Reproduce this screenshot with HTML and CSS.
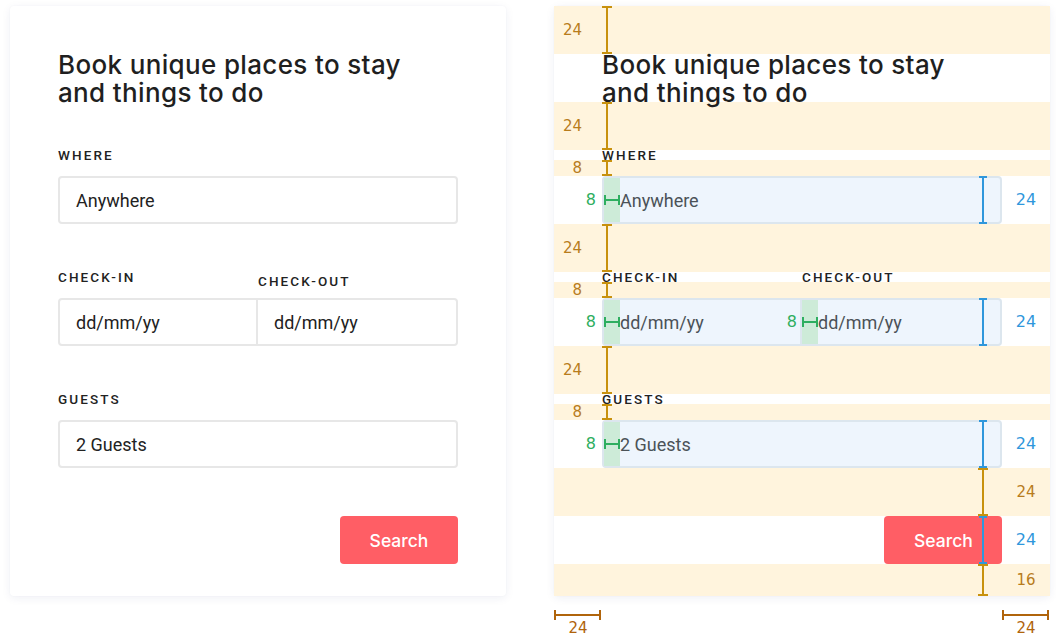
FILE: index.html
```html
<!DOCTYPE html>
<html lang="en">
<head>
<meta charset="utf-8">
<title>Booking form redline</title>
<link rel="stylesheet" href="styles.css">
</head>
<body>
<div class="page">
  <section class="card card--form">
    <div class="title-box"><h1 class="title">Book unique places to stay<br>and things to do</h1></div>

    <div class="field">
      <div class="label">WHERE</div>
      <div class="input">Anywhere</div>
    </div>

    <div class="field">
      <div class="label-row">
        <div class="label">CHECK-IN</div>
        <div class="label label--low">CHECK-OUT</div>
      </div>
      <div class="input-row">
        <div class="input input--half">dd/mm/yy</div>
        <div class="input input--half input--joined">dd/mm/yy</div>
      </div>
    </div>

    <div class="field">
      <div class="label">GUESTS</div>
      <div class="input">2 Guests</div>
    </div>

    <div class="actions">
      <button class="btn" type="button">Search</button>
    </div>
  </section>

  <div class="redline-col">
    <section class="card card--redline">
      <div class="band band--48">
        <span class="vbar vbar--left"></span><span class="num num--left">24</span>
      </div>
      <div class="row row--title">
        <h1 class="title">Book unique places to stay<br>and things to do</h1>
      </div>
      <div class="band band--48">
        <span class="vbar vbar--left"></span><span class="num num--left">24</span>
      </div>
      <div class="row row--label">
        <div class="label">WHERE</div>
      </div>
      <div class="band band--16">
        <span class="vbar vbar--left"></span><span class="num num--left">8</span>
      </div>
      <div class="row row--input">
        <div class="rl-input">
          <span class="pad"><span class="hbar-green"></span><span class="num-green">8</span></span>
          <span class="rl-text">Anywhere</span>
          <span class="vbar-blue"></span>
        </div>
        <span class="num num--right num--blue">24</span>
      </div>
      <div class="band band--48">
        <span class="vbar vbar--left"></span><span class="num num--left">24</span>
      </div>
      <div class="row row--label row--split">
        <div class="label label--half">CHECK-IN</div>
        <div class="label label--half">CHECK-OUT</div>
      </div>
      <div class="band band--16">
        <span class="vbar vbar--left"></span><span class="num num--left">8</span>
      </div>
      <div class="row row--input">
        <div class="rl-input rl-input--half">
          <span class="pad"><span class="hbar-green"></span><span class="num-green">8</span></span>
          <span class="rl-text">dd/mm/yy</span>
        </div>
        <div class="rl-input rl-input--half rl-input--joined">
          <span class="pad"><span class="hbar-green"></span><span class="num-green">8</span></span>
          <span class="rl-text">dd/mm/yy</span>
          <span class="vbar-blue"></span>
        </div>
        <span class="num num--right num--blue">24</span>
      </div>
      <div class="band band--48">
        <span class="vbar vbar--left"></span><span class="num num--left">24</span>
      </div>
      <div class="row row--label">
        <div class="label">GUESTS</div>
      </div>
      <div class="band band--16">
        <span class="vbar vbar--left"></span><span class="num num--left">8</span>
      </div>
      <div class="row row--input">
        <div class="rl-input">
          <span class="pad"><span class="hbar-green"></span><span class="num-green">8</span></span>
          <span class="rl-text">2 Guests</span>
          <span class="vbar-blue"></span>
        </div>
        <span class="num num--right num--blue">24</span>
      </div>
      <div class="band band--48">
        <span class="vbar vbar--right"></span><span class="num num--right">24</span>
      </div>
      <div class="row row--actions">
        <button class="btn btn--rl" type="button">Search<span class="vbar-blue vbar-blue--btn"></span></button>
        <span class="num num--right num--blue">24</span>
      </div>
      <div class="band band--32">
        <span class="vbar vbar--right"></span><span class="num num--right">16</span>
      </div>
    </section>

    <div class="measures">
      <div class="measure"><div class="hbar"></div><div class="measure-num">24</div></div>
      <div class="measure"><div class="hbar"></div><div class="measure-num">24</div></div>
    </div>
  </div>
</div>
</body>
</html>
```

FILE: styles.css
```css
* { box-sizing: border-box; }

html, body {
  margin: 0;
  padding: 0;
  background: #ffffff;
}

body {
  font-family: Roboto, "Noto Sans", Arial, sans-serif;
  color: #222222;
}

.page {
  display: flex;
  align-items: flex-start;
  gap: 48px;
  padding: 6px 0 0 10px;
}

.card {
  width: 496px;
  background: #ffffff;
  border-radius: 4px;
  box-shadow: 0 2px 10px rgba(30, 40, 110, 0.07), 0 0 2px rgba(30, 40, 110, 0.04);
}

/* ---------- Form card ---------- */
.card--form {
  padding: 48px 48px 32px;
}

.title-box {
  display: flow-root;
  height: 48px;
}

.title {
  margin: -3px 0 0;
  font-family: Inter, Roboto, sans-serif;
  font-size: 26px;
  line-height: 28px;
  font-weight: 500;
  color: #1f1f1f;
  letter-spacing: 0.35px;
  white-space: nowrap;
}

.field {
  margin-top: 48px;
}

.label {
  height: 10px;
  font-size: 13.5px;
  line-height: 10px;
  font-weight: 500;
  letter-spacing: 2.1px;
  color: #222222;
  white-space: nowrap;
  margin-bottom: 16px;
}

.label-row {
  display: flex;
  height: 10px;
  margin-bottom: 16px;
}

.label-row .label {
  width: 200px;
  margin-bottom: 0;
}

.label--low {
  padding-top: 4px;
}

.input {
  height: 48px;
  border: 2px solid #e7e7e7;
  border-radius: 4px;
  padding: 0 16px;
  display: flex;
  align-items: center;
  font-size: 18px;
  color: #222222;
}

.input-row {
  display: flex;
}

.input--half {
  width: 200px;
}

.input--half:first-child {
  border-top-right-radius: 0;
  border-bottom-right-radius: 0;
}

.input--joined {
  border-left: none;
  border-top-left-radius: 0;
  border-bottom-left-radius: 0;
}

.actions {
  margin-top: 48px;
  display: flex;
  justify-content: flex-end;
}

.btn {
  position: relative;
  width: 118px;
  height: 48px;
  border: none;
  border-radius: 4px;
  background: #ff5e65;
  color: #ffffff;
  font-family: Inter, Roboto, sans-serif;
  font-size: 17.5px;
  font-weight: 500;
  padding: 0;
  cursor: pointer;
}

/* ---------- Redline card ---------- */
.redline-col {
  display: flex;
  flex-direction: column;
}

.card--redline {
  display: flex;
  flex-direction: column;
}

.band {
  position: relative;
  background: #fff4dd;
}

.band--48 { height: 48px; }
.band--16 { height: 16px; }
.band--32 { height: 32px; }

.row {
  position: relative;
  display: flow-root;
  padding: 0 48px;
}

.row--title { height: 48px; position: relative; z-index: 1; }
.row--label { height: 10px; }
.row--label .label { margin-bottom: 0; }
.row--split { display: flex; }
.label--half { width: 200px; }
.row--input { display: flex; height: 48px; }
.row--actions {
  display: flex;
  justify-content: flex-end;
  height: 48px;
}

/* orange vertical measure */
.vbar {
  position: absolute;
  top: 0;
  bottom: 0;
  width: 2px;
  background: #c8910d;
  z-index: 2;
}

.vbar::before,
.vbar::after {
  content: "";
  position: absolute;
  left: -4px;
  width: 10px;
  height: 2px;
  background: #c8910d;
}

.vbar::before { top: 0; }
.vbar::after { bottom: 0; }

.vbar--left { left: 52px; }
.vbar--right { left: 428px; }

.num {
  position: absolute;
  top: 50%;
  transform: translateY(-50%);
  font-family: "DejaVu Sans", Verdana, sans-serif;
  font-size: 15px;
  line-height: 16px;
  color: #b87c1c;
}

.num--left {
  left: 0;
  width: 28px;
  text-align: right;
}

.num--right {
  left: 448px;
  width: 48px;
  text-align: center;
}

.num--blue {
  color: #2f97dc;
  font-size: 16px;
}

/* redline inputs */
.rl-input {
  position: relative;
  width: 400px;
  height: 48px;
  border: 2px solid #dce6ee;
  border-radius: 4px;
  background: #eef5fd;
  display: flex;
  align-items: stretch;
  font-size: 18px;
  color: #4b5258;
}

.rl-input--half {
  width: 200px;
}

.rl-input--half:first-child {
  border-top-right-radius: 0;
  border-bottom-right-radius: 0;
}

.rl-input--joined {
  border-left: none;
  border-top-left-radius: 0;
  border-bottom-left-radius: 0;
}

.pad {
  position: relative;
  width: 16px;
  flex: none;
  background: #cdebd8;
}

.rl-text {
  display: flex;
  align-items: center;
}

.hbar-green {
  position: absolute;
  left: 0;
  right: 0;
  top: 50%;
  height: 2px;
  margin-top: -1px;
  background: #2eae60;
}

.hbar-green::before,
.hbar-green::after {
  content: "";
  position: absolute;
  top: -4px;
  width: 2px;
  height: 10px;
  background: #2eae60;
}

.hbar-green::before { left: 0; }
.hbar-green::after { right: 0; }

.num-green {
  position: absolute;
  right: calc(100% + 8px);
  top: 50%;
  transform: translateY(-50%);
  font-family: "DejaVu Sans", Verdana, sans-serif;
  font-size: 16px;
  line-height: 16px;
  color: #2eae60;
}

.rl-input--joined .num-green {
  right: calc(100% + 5px);
}

/* blue vertical measure inside a box */
.vbar-blue {
  position: absolute;
  top: -2px;
  bottom: -2px;
  right: 16px;
  width: 2px;
  background: #2f97dc;
  z-index: 3;
}

.vbar-blue::before,
.vbar-blue::after {
  content: "";
  position: absolute;
  left: -3px;
  width: 8px;
  height: 2px;
  background: #2f97dc;
}

.vbar-blue::before { top: 0; }
.vbar-blue::after { bottom: 0; }

.vbar-blue--btn {
  top: 0;
  bottom: 0;
  right: 18px;
}

.btn--rl {
  text-align: left;
  padding-left: 30px;
}

/* bottom horizontal measures */
.measures {
  display: flex;
  justify-content: space-between;
}

.measure {
  width: 48px;
  display: flex;
  flex-direction: column;
  align-items: center;
}

.hbar {
  position: relative;
  width: 47px;
  height: 2px;
  margin-top: 18px;
  background: #b0640b;
  align-self: flex-start;
}

.hbar::before,
.hbar::after {
  content: "";
  position: absolute;
  top: -4px;
  width: 2px;
  height: 10px;
  background: #b0640b;
}

.hbar::before { left: 0; }
.hbar::after { right: 0; }

.measure-num {
  margin-top: 4px;
  font-family: "DejaVu Sans", Verdana, sans-serif;
  font-size: 15px;
  line-height: 16px;
  color: #b0640b;
}
```
